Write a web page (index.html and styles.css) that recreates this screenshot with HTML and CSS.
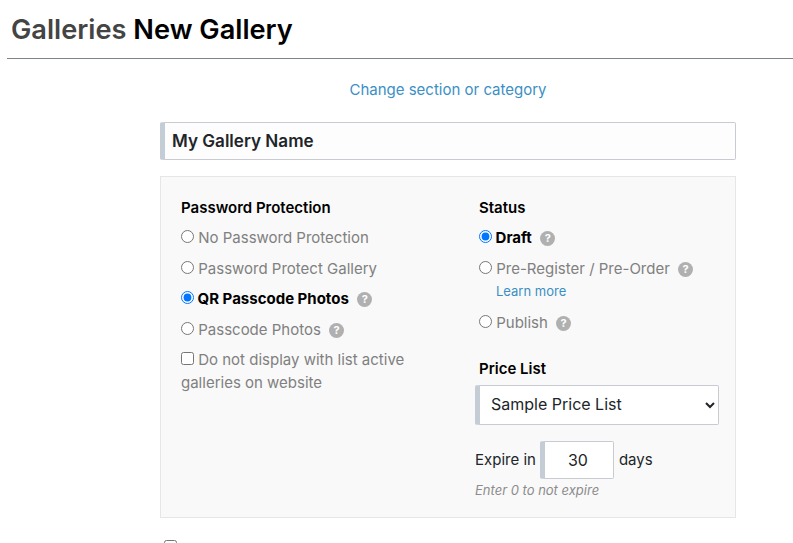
FILE: index.html
```html
<!DOCTYPE html>
<html lang="en">
<head>
    <meta charset="UTF-8">
    <meta name="viewport" content="width=device-width, initial-scale=1.0">
    <title>New Gallery</title>
    <link rel="stylesheet" href="styles.css">
</head>
<body>
    <h1 class="page-title"><span class="crumb">Galleries</span> New Gallery</h1>

    <div class="change-link"><a href="#">Change section or category</a></div>

    <form class="gallery-form">
        <input class="name-input" type="text" value="My Gallery Name">

        <div class="panel">
            <div class="col col-left">
                <h4 class="col-title">Password Protection</h4>
                <label class="opt"><input type="radio" name="pw"> No Password Protection</label>
                <label class="opt"><input type="radio" name="pw"> Password Protect Gallery</label>
                <label class="opt on"><input type="radio" name="pw" checked> QR Passcode Photos <span class="help">?</span></label>
                <label class="opt"><input type="radio" name="pw"> Passcode Photos <span class="help">?</span></label>
                <label class="opt wrap"><input type="checkbox"> Do not display with list active galleries on website</label>
            </div>

            <div class="col col-right">
                <h4 class="col-title">Status</h4>
                <label class="opt on"><input type="radio" name="status" checked> Draft <span class="help">?</span></label>
                <label class="opt"><input type="radio" name="status"> Pre-Register / Pre-Order <span class="help">?</span></label>
                <a class="learn" href="#">Learn more</a>
                <label class="opt"><input type="radio" name="status"> Publish <span class="help">?</span></label>

                <h4 class="col-title price-title">Price List</h4>
                <select class="price-select">
                    <option>Sample Price List</option>
                </select>

                <div class="expire">
                    Expire in
                    <input class="days-input" type="text" value="30">
                    days
                </div>
                <div class="hint">Enter 0 to not expire</div>
            </div>
        </div>

        <div class="below"><input type="checkbox"></div>
    </form>
</body>
</html>
```

FILE: styles.css
```css
html, body {
    height: 100%;
    overflow: hidden;
}

body {
    margin: 0;
    background-color: #fff;
    color: #212529;
    font-family: Inter, "Liberation Sans", sans-serif;
    font-size: 15px;
}

.page-title {
    margin: 0 0 0 7px;
    padding: 13px 4px 12px;
    height: 33px;
    line-height: 33px;
    font-size: 27.2px;
    font-weight: 600;
    color: #000;
    border-bottom: 1px solid #7d848b;
}

.crumb {
    color: #444;
}

.change-link {
    margin: 22px 0 0 160px;
    width: 576px;
    text-align: center;
    line-height: 18px;
}

.change-link a {
    color: #3b8fc4;
    text-decoration: none;
}

.gallery-form {
    margin: 23px 57px 0 160px;
}

.name-input {
    display: block;
    box-sizing: border-box;
    width: 100%;
    height: 38px;
    padding: 0 8px 1px 7px;
    border: 1px solid #c8ccd2;
    border-left: 5px solid #c4ccd6;
    border-radius: 2px;
    background-color: #fdfdfd;
    color: #212529;
    font-family: inherit;
    font-size: 17.1px;
    font-weight: 600;
}

.panel {
    display: flex;
    box-sizing: border-box;
    height: 342px;
    margin-top: 16px;
    padding: 22px 16px 0 20px;
    background-color: #f9f9f9;
    border: 1px solid #e6e6e6;
}

.col-left {
    width: 298px;
}

.col-right {
    flex: 1;
}

.col-title {
    margin: 0 0 5px;
    line-height: 18px;
    font-size: 15px;
    font-weight: 600;
    color: #000;
}

.opt {
    display: block;
    height: 30.67px;
    line-height: 31px;
    color: #808080;
}

.opt input {
    margin: 0;
    vertical-align: 0;
}

.opt.on {
    font-weight: 700;
    color: #000;
}

.opt.wrap {
    height: auto;
    width: 240px;
    line-height: 23px;
    margin-top: 3px;
}

.help {
    display: inline-block;
    width: 15px;
    height: 15px;
    margin-left: 4px;
    border-radius: 50%;
    background-color: #b0b0b0;
    color: #fff;
    font-size: 11px;
    font-weight: 700;
    line-height: 15px;
    text-align: center;
    vertical-align: 1px;
}

.on .help {
    margin-left: 5px;
}

.learn {
    display: block;
    margin: -1px 0 7px 17px;
    height: 18px;
    line-height: 18px;
    font-size: 13px;
    color: #3b8fc4;
    text-decoration: none;
}

.price-title {
    margin-top: 22px;
}

.price-select {
    display: block;
    box-sizing: border-box;
    width: 244px;
    height: 40px;
    margin: 7px 0 0 -4px;
    padding: 0 6px 2px 7px;
    border: 1px solid #c8ccd2;
    border-left: 5px solid #c4ccd6;
    border-radius: 2px;
    background-color: #fff;
    color: #212529;
    font-family: inherit;
    font-size: 16px;
}

.expire {
    display: flex;
    align-items: center;
    gap: 4px;
    margin: 16px 0 0 -4px;
    color: #212529;
}

.days-input {
    box-sizing: border-box;
    width: 74px;
    height: 38px;
    margin-right: 1px;
    padding: 0 2px 0 0;
    border: 1px solid #c8ccd2;
    border-left: 5px solid #c4ccd6;
    border-radius: 2px;
    color: #212529;
    font-family: inherit;
    font-size: 16px;
    text-align: center;
}

.hint {
    margin: 2px 0 0 -4px;
    line-height: 18px;
    font-size: 13px;
    font-style: italic;
    color: #8c8c8c;
}

.below {
    margin: 22px 0 0 4px;
    line-height: 13px;
}

.below input {
    display: block;
    margin: 0;
}
```
